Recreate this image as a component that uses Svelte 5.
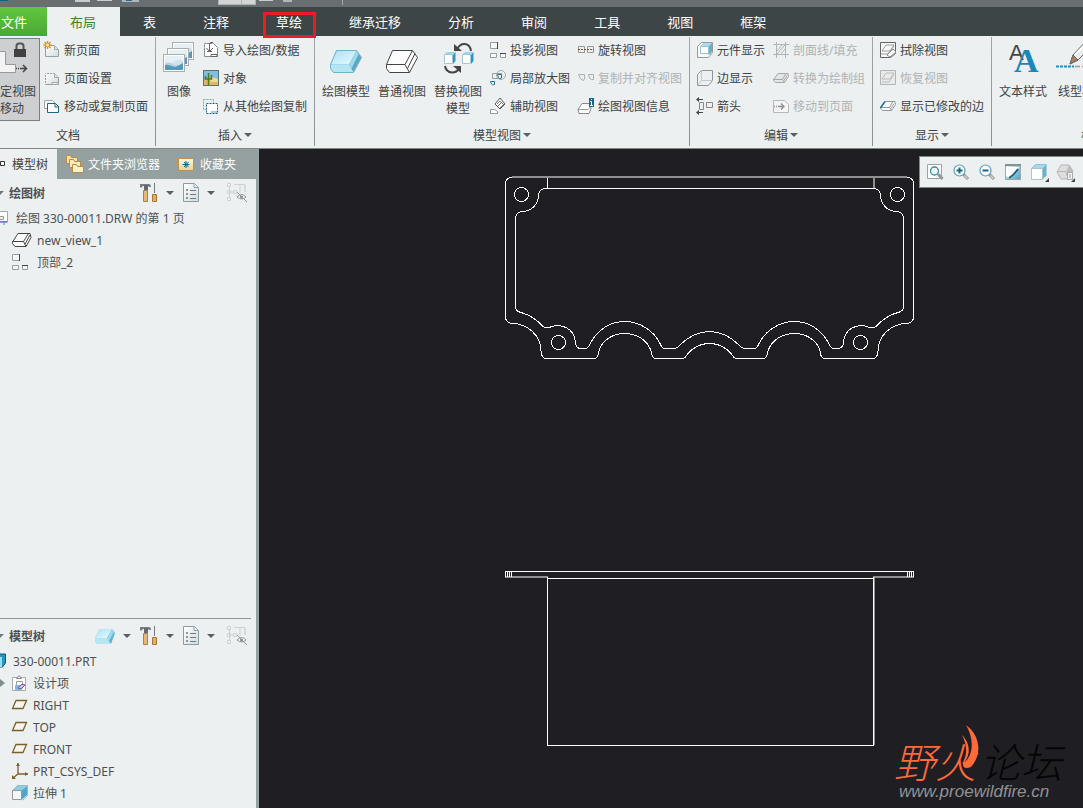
<script>
    let activeTab = $state("布局");
    let activePanel = $state("模型树");

    const tabs = ["布局", "表", "注释", "草绘", "继承迁移", "分析", "审阅", "工具", "视图", "框架"];

    const groups = [
        {
            name: "文档",
            large: [{label: "锁定视图移动", icon: "lockView", pressed: true}],
            columns: [[
                {label: "新页面", icon: "newSheet"},
                {label: "页面设置", icon: "sheetSetup"},
                {label: "移动或复制页面", icon: "moveSheet"}
            ]]
        },
        {
            name: "插入",
            menu: true,
            large: [{label: "图像", icon: "images", narrow: true}],
            columns: [[
                {label: "导入绘图/数据", icon: "importData"},
                {label: "对象", icon: "object"},
                {label: "从其他绘图复制", icon: "copyFrom"}
            ]]
        },
        {
            name: "模型视图",
            menu: true,
            large: [
                {label: "绘图模型", icon: "model"},
                {label: "普通视图", icon: "general"},
                {label: "替换视图模型", icon: "replace"}
            ],
            columns: [
                [
                    {label: "投影视图", icon: "projection"},
                    {label: "局部放大图", icon: "detail"},
                    {label: "辅助视图", icon: "auxiliary"}
                ],
                [
                    {label: "旋转视图", icon: "revolved"},
                    {label: "复制并对齐视图", icon: "copyAlign", disabled: true},
                    {label: "绘图视图信息", icon: "viewInfo"}
                ]
            ]
        },
        {
            name: "编辑",
            menu: true,
            large: [],
            columns: [
                [
                    {label: "元件显示", icon: "component"},
                    {label: "边显示", icon: "edges"},
                    {label: "箭头", icon: "arrows"}
                ],
                [
                    {label: "剖面线/填充", icon: "hatch", disabled: true},
                    {label: "转换为绘制组", icon: "convert", disabled: true},
                    {label: "移动到页面", icon: "toSheet", disabled: true}
                ]
            ]
        },
        {
            name: "显示",
            menu: true,
            large: [],
            columns: [[
                {label: "拭除视图", icon: "erase"},
                {label: "恢复视图", icon: "resume", disabled: true},
                {label: "显示已修改的边", icon: "modified"}
            ]]
        },
        {
            name: "格式",
            menu: true,
            last: true,
            large: [
                {label: "文本样式", icon: "textStyle"},
                {label: "线型样式", icon: "lineStyle", wide: true}
            ],
            columns: []
        }
    ];

    const panels = [
        {label: "模型树", icon: "treeTab", width: 8},
        {label: "文件夹浏览器", icon: "folders", width: 18},
        {label: "收藏夹", icon: "favorites", width: 16}
    ];

    const drawingTree = [
        {label: "new_view_1", icon: "viewNode"},
        {label: "顶部_2", icon: "projection"}
    ];

    const modelTree = [
        {label: "设计项", icon: "design", expandable: true},
        {label: "RIGHT", icon: "plane"},
        {label: "TOP", icon: "plane"},
        {label: "FRONT", icon: "plane"},
        {label: "PRT_CSYS_DEF", icon: "csys"},
        {label: "拉伸 1", icon: "extrude"}
    ];

    const viewTools = [
        {label: "重新调整", icon: "refit"},
        {label: "放大", icon: "zoomIn"},
        {label: "缩小", icon: "zoomOut"},
        {label: "重画", icon: "repaint"},
        {label: "显示样式", icon: "cube"},
        {label: "注释显示", icon: "annotation"}
    ];

    const page = `<path d="M1.5 3.5h9l4 4v7h-13z" fill="url(#paper)" stroke="#9a9fa0"/><path d="M10.5 3.5v4h4" fill="#dde1e2" stroke="#a5aaab"/>`;
    const block = (line, fill)=>`<path d="M5 3.500h10l.500 3-4 6h-9l-2-2v-1z" fill="${fill}" stroke="${line}"/><path d="M.5 9.500h9l3.500-6M9.500 9.500l2 3M11 10.500l3-5" fill="none" stroke="${line}"/>`;
    const lens = `<circle cx="6.500" cy="6.500" r="5.500" fill="#fff" stroke="#5b9fba" stroke-width="1.200"/><path d="M10.500 10.500l4.500 4.500" stroke="#8d9294" stroke-width="3"/><path d="M11.500 11.500l3 3" stroke="#e7d3c4" stroke-width="1.200"/>`;
    const picture = (x, y)=>`<g transform="translate(${x} ${y})"><rect x=".5" y=".5" width="21" height="17" fill="#fff" stroke="#a9afb1"/><rect x="2" y="2" width="18" height="14" fill="#cfe3ed"/><path d="M2 2h18v5q-5-3-9 1T2 7z" fill="#e6f1f6"/><path d="M2 11q6-2 9 0t9-2v7H2z" fill="#5598b9"/><path d="M2 10q4-3 8 0t10 0l-8 3z" fill="#b9d3df"/></g>`;
    const smallCube = (x)=>`<g transform="translate(${x} 10)"><path d="M9 3l2.500-3v9L9 12z" fill="#239bc9"/><path d="M0 2.500L3 0h8.500L9 2.500z" fill="#9ad5ea"/><path d="M.5 2.500h8v9h-8z" fill="#fff" stroke="#a5c6d1"/></g>`;

    const icons = {
        lockView: `<path d="M0 9.500h9.500v13h10v8H0" fill="#f3f3f3" stroke="#999"/><path d="M20.500 8V4q0-2.500 2.500-2.500h2q2.500 0 2.500 2.500v4" fill="none" stroke="#555" stroke-width="2"/><rect x="18" y="7" width="12" height="8" fill="#414141"/><path d="M20 26.500h1m1 0h1m1 0h6M27 23l3.500 3.500L27 30" fill="none" stroke="#444" stroke-width="1.500"/>`,
        images: picture(9, 0) + picture(4, 6) + picture(0, 12),
        model: `<path d="M6.500 8.500h20l5 7-8 15h-20l-3-4v-4z" fill="#5aa7c8"/><path d="M6.500 8.500h20l-7.500 14H.500z" fill="url(#ice)"/><path d="M.5 22.500H19l4.500 8h-20l-3-4z" fill="#b5e6f4"/><path d="M26.500 8.500L19 22.500l2.500 4 7.500-15z" fill="#9fd8eb"/><path d="M6.500 8.500h20l5 7-8 15h-20l-3-4v-4z" fill="none" stroke="#6fb3cd"/>`,
        general: `<path d="M6.500 8.500h20l5 7-8 15h-20l-3-4v-4z" fill="#fdfdfd" stroke="#454545"/><path d="M.5 22.500H19L26.500 8.500M19 22.500l4.500 8M21.500 26.500L29 11.500" fill="none" stroke="#454545"/>`,
        replace: smallCube(2) + smallCube(20) + `<path d="M15 7Q18 1.500 23 2q5 .5 6 7" fill="none" stroke="#454545" stroke-width="2"/><path d="M12 2v7h8zM19 24v7l-8-7z" fill="#454545"/><path d="M3 24q1 6 7 6.500 5 0 7-4" fill="none" stroke="#454545" stroke-width="2"/>`,
        textStyle: `<text x="2" y="18" font-family="Liberation Sans, sans-serif" font-size="22" fill="#454545">A</text><text x="7" y="30" font-family="Liberation Serif, serif" font-weight="bold" font-size="34" fill="#1b86b9">A</text>`,
        lineStyle: `<path d="M-10 24.500H8" stroke="#1c91c8" stroke-width="2" stroke-dasharray="3 1"/><path d="M9 24.500h30" stroke="#999" stroke-width="1.500" stroke-dasharray="5 2"/><path d="M4 22l3-9L22-3l6 5L12 18z" fill="#e8e9e9" stroke="#666"/><path d="M4 22l3-9 5 5z" fill="#a97e62" stroke="#666"/><path d="M9 13L23-1" stroke="#fff" stroke-width="2"/>`,
        newSheet: page + `<path d="M3.500-1v8M-.5 3h8M.5 0l6 6M6.500 0l-6 6" stroke="#e58a1c" stroke-width="1.300"/><circle cx="3.500" cy="3" r="1.500" fill="#fff1a0"/>`,
        sheetSetup: page + `<path d="M2 3.500h8M1.500 4v10" stroke="#ecf0f1" stroke-dasharray="1 2"/><path d="M8 12.500h6v2H8z" fill="#eee" stroke="#aaa"/>`,
        moveSheet: `<path d="M.5 2.500h8l3 3v5H.5z" fill="#fff" stroke="#a1a6a7"/><path d="M3.500 5.500h8l3 3v6h-11z" fill="#fff" stroke="#1d6485"/><path d="M11 6v3h4" fill="none" stroke="#1d6485"/>`,
        importData: `<path d="M1.500 1.500h9l4 4v9h-13z" fill="#fff" stroke="#888"/><path d="M2 6V1h8" fill="none" stroke="#ecf0f1" stroke-dasharray="1 2"/><path d="M6.500 9V2q0-1.500 1.500-1.500h2M3.500 6l3 3.500L10 6M4 9.500h5M8 12.500h6v2H8z" fill="none" stroke="#666"/>`,
        object: `<rect x=".5" y=".5" width="15" height="15" fill="#82bde0" stroke="#58717b"/><path d="M1 10q7-5 14 0v5H1z" fill="#dfb46c"/><path d="M9 7l6 2v3H7z" fill="#f0d79d"/><path d="M5.500 15V3M2.500 6v3h6V5" fill="none" stroke="#4b7a23" stroke-width="1.500"/>`,
        copyFrom: `<path d="M.5 1.500h10v10H.5z" fill="none" stroke="#8fa3ac" stroke-dasharray="2 1"/><path d="M3.500 5.500h11v10h-11z" fill="#fff" stroke="#1d6485" stroke-dasharray="2 1"/><path d="M8 13h6v2H8z" fill="#a8ccda"/>`,
        projection: `<path d="M.5.5h7v6h-7zM.5 11.500h6v4h-6zM10.500 11.500h5v4h-5z" fill="#f8f8f8" stroke="#979c9e"/><path d="M7.500 0v7M10 11.500h6" stroke="#444"/>`,
        detail: `<path d="M2.500 3.500h9v5h-9z" fill="none" stroke="#979c9e"/><circle cx="11" cy="5" r="4.500" fill="none" stroke="#a5aaab"/><path d="M7.500 4.500h4v3q-2 2-3 0zM.5 11.500h4v3q-2 1-3-.5z" fill="#fff" stroke="#1b7198"/>`,
        auxiliary: `<path d="M10 0l5 6-5 5-5-5z" fill="#fff" stroke="#555"/><path d="M7 6l3-3 3 3M8 8l4-4M10 10l4-4" stroke="#777" fill="none"/><path d="M.5 15.500v-4h4l3 2v2z" fill="#fff" stroke="#999"/>`,
        revolved: `<path d="M.5 4.500h6v6h-6zM9.500 4.500h6v6h-6z" fill="none" stroke="#999"/><path d="M0 7.500h16" stroke="#765a35" stroke-dasharray="2 1"/>`,
        copyAlign: `<path d="M.5 4.500h6q1 4-1 6Q2 10 .5 4.500zM10.500 4.500h5v5q-4 1-5-5z" fill="none" stroke="#aaafb0"/>`,
        viewInfo: `<path d="M4 5.500h8l1 5-2 5H1l-1-4z" fill="#fff" stroke="#888"/><path d="M0 11.500h10L14 7" fill="none" stroke="#999"/><rect x="11" y="0" width="5" height="9" fill="#146b91"/><path d="M12 3.500h1.500V7M12 7.500h3M13 1.500h1" stroke="#fff" fill="none"/>`,
        component: `<path d="M.5 4.500l4-4h11v10l-4 5H.500z" fill="#fafafa" stroke="#999"/><path d="M4 4l3-3h8v9l-3 3z" fill="#58b4d8"/><path d="M4 4l3-3h8l-3 3z" fill="#a9ddee"/><path d="M3.500 4.500h8v7h-8z" fill="#fff" stroke="#9cc3d1"/>`,
        edges: `<path d="M.5 4.500l4-4h11v10l-4 5H.500z" fill="none" stroke="#8f9596"/><path d="M4.500.500v10h11M4.500 10.500l-4 5" fill="none" stroke="#c3c8c9"/>`,
        arrows: `<path d="M0 1.500h6M0 14.500h6" stroke="#444"/><path d="M2-1l-3 2.500L2 4zM2 12l-3 2.500L2 17z" fill="#444"/><path d="M2.500 4.500h4v7h-4zM9.500 4.500h6v5h-6z" fill="none" stroke="#888"/>`,
        hatch: `<path d="M3.500 0v16M12.500 0v16M0 2.500h16M0 12.500h16M4 9l5-6M4 12l8-9M8 12l4-5" fill="none" stroke="#b0b5b6"/>`,
        convert: block("#a5a9aa", "#e4e6e6"),
        toSheet: `<path d="M.5 2.500h11l4 4v8H.500z" fill="#f3f4f4" stroke="#b5b9ba"/><path d="M1 8.500h1m1 0h1m1 0h6M8 5.500l3 3-3 3" fill="none" stroke="#8c9192" stroke-width="1.300"/>`,
        erase: `<path d="M.5.500h15v11l-5 4H.500z" fill="#f8f8f8" stroke="#666"/><path d="M2 9l4-6h8l-4 6zM1 12h7l6-8" fill="none" stroke="#9b9fa0"/><path d="M7 13l6-6 3 3-6 5z" fill="#fff" stroke="#888"/>`,
        resume: `<path d="M.5.500h15v14H.500z" fill="#e9ebeb" stroke="#b0b4b5"/><path d="M2 9l4-6h8l-4 6zM2 12h7l5-8" fill="none" stroke="#b9bdbe"/>`,
        modified: block("#92989a", "#fff") + `<path d="M.5 10l4.500-6.500" stroke="#1b7198" stroke-width="1.500"/>`,
        treeTab: `<path d="M.5 5.500h4v4h-4z" fill="#fff" stroke="#333"/>`,
        folders: `<path d="M.5.500h4l1 2h6v6H.500z" fill="#f8e2a5" stroke="#b68d46"/><path d="M3.500 4.500h4l1 2h6v6h-11z" fill="#fae9b9" stroke="#b68d46"/><path d="M6.500 9.500h4l1 2h6v6h-11z" fill="#fff0c7" stroke="#b68d46"/>`,
        favorites: `<path d="M.5 2.500h15v12H.500z" fill="url(#folder)" stroke="#ba934e"/><path d="M8 5v7M4.500 8.500h7M6 6l4.500 5M10.500 6L6 11" stroke="#096488" stroke-width="1"/>`,
        tools: `<path d="M0 4V1h9q2 0 2 3H9L8 3H3L1 5z" fill="#777e85"/><path d="M4 2h4v5H4z" fill="#626b73"/><path d="M3.500 7.500h4v11h-4z" fill="#e3b878" stroke="#b07f42"/><path d="M14 0h1v10h-1z" fill="#747a83"/><path d="M12.500 11.500h4v7h-4z" fill="#e3b060" stroke="#a57438"/>`,
        list: `<path d="M.5.500h11l4 4v14H.500z" fill="url(#paper)" stroke="#8d9ca3"/><path d="M11 .500v4h4" fill="#eef2f3" stroke="#91a0a6"/><path d="M7 7.500h6M7 11.500h6M7 15.500h6" stroke="#777"/><path d="M3.500 6.500h1v1h-1zM3.500 10.500h1v1h-1zM3.500 14.500h1v1h-1z" fill="none" stroke="#777"/>`,
        hiddenTree: `<path d="M.5.500h3v3h-3zM.5 14.500h3v3h-3zM.5 7.500h3v3h-3zM6.500 7.500h3v3h-3zM2.500 4v10M4 9h3M7 1.500h11v7M13 2v8M18 2v7" fill="none" stroke="#ced2d3"/><path d="M10 14q5-5 9 0-4 4-9 0z" fill="#ecf0f1" stroke="#999"/><circle cx="14.500" cy="14" r="1.500" fill="#888"/><path d="M10 9l10 10" stroke="#999"/>`,
        prism: `<path d="M5 3h12l3 4-4 11H2l-2-3v-3z" fill="#5fb2d2"/><path d="M5 3h12l-5 9H0z" fill="url(#ice)"/><path d="M0 12h12l4 6H2l-2-3z" fill="#b5e6f4"/><path d="M17 3l-5 9 2 3 5-9z" fill="#9fd8eb"/>`,
        sheetNode: `<path d="M0 1.500h7.500v11H0" fill="#fff" stroke="#9ab"/><path d="M0 11.500h7M4 12v3" stroke="#199bcb"/><path d="M0 6.500h3.500v3H0" fill="#eee" stroke="#999"/>`,
        viewNode: `<path d="M6 1.500h12l1 4-5 9H3l-2.500-3V10z" fill="#fff" stroke="#444"/><path d="M.5 9.500h11l5-8M11.500 9.500l2.500 5M13 12l5-9" fill="none" stroke="#444"/>`,
        part: `<path d="M-8 4l4-3H5.500v9l-3 4H-8z" fill="#2696be" stroke="#125a78"/><path d="M-8 4H2v10h-10z" fill="#93def3"/>`,
        design: `<path d="M.5 2.500h13v13H.500z" fill="#fff" stroke="#aaa"/><path d="M4.500 3.500h5L7 .500z" fill="#eee" stroke="#888"/><path d="M4.500 6.500h6v4h-6z" fill="#fff" stroke="#999"/><path d="M3 10h6l2-2v5l-2 2H3z" fill="#78bfdd"/><path d="M6 13l4-4 3 1-4 4z" fill="#d9b5ea" stroke="#80529f"/>`,
        plane: `<path d="M4 3.500h10.500L11 11.500H.500z" fill="#f7f4ec" stroke="#79602d" stroke-width="1.300"/>`,
        csys: `<path d="M6 0v11h10M6 11l-5 4" fill="none" stroke="#79602d" stroke-width="1.300"/><path d="M4 3h4L6 0zM13 9v4l3-2zM0 12v4h4z" fill="#79602d"/>`,
        extrude: `<path d="M9.500 5.500L15 1v9l-5.500 5z" fill="#4ba7cb"/><path d="M.5 5.500l5-5h10l-6 5z" fill="#8ccce4" stroke="#9bb7c2"/><path d="M15.500.500v10l-5 5" fill="none" stroke="#9bb7c2"/><path d="M.5 5.500h9v9h-9z" fill="#f7f7f7" stroke="#999"/>`,
        refit: `<path d="M.5.500h14v14H.500z" fill="#fff" stroke="#9ba4a6"/><circle cx="7.500" cy="7" r="4" fill="#eff9fc" stroke="#3b87a5" stroke-width="1.300"/><path d="M11 10l4.500 5" stroke="#94979a" stroke-width="3"/>`,
        zoomIn: lens + `<path d="M6.500 3.500v6M3.500 6.500h6" stroke="#13678b" stroke-width="2"/>`,
        zoomOut: lens + `<path d="M3.500 6.500h6" stroke="#13678b" stroke-width="2"/>`,
        repaint: `<rect x=".5" y=".5" width="15" height="15" fill="url(#sky)" stroke="#9baaaf"/><path d="M1 3h13q-4 8-10 11l-3-2z" fill="#fff"/><path d="M13 5Q9 11 4 14" fill="none" stroke="#155c7a" stroke-width="1.800"/><path d="M0 1h16" stroke="#8a8f91" stroke-width="2"/>`,
        cube: `<path d="M11.500 4.500l4-4v11l-4 4z" fill="#62b5d3"/><path d="M.5 4.500l4-4h11l-4 4z" fill="#a4daec" stroke="#8fc4d6"/><path d="M.5 4.500h11v11H.500z" fill="#fff" stroke="#a5c6d1"/><path d="M18 14v4h-4z" fill="#444"/>`,
        annotation: `<path d="M0 8l4-7h8l4 6-3 8H4z" fill="#dedede" stroke="#b5b5b5"/><path d="M9 8l3-7 4 6v5H9z" fill="#bdbdbd"/><path d="M0 7.500h9" stroke="#b5b5b5"/><path d="M10.500 8.500h5v7h-5z" fill="#f2f2f2" stroke="#aaa"/><path d="M12 11h2m-2 2h2" stroke="#999"/><path d="M18 14v4h-4z" fill="#444"/>`
    };
</script>

{#snippet icon(name, width = 16, height = 16)}
    <svg class="icon" {width} {height} viewBox="0 0 {width} {height}" aria-hidden="true">{@html icons[name]}</svg>
{/snippet}

{#snippet paneTools(prism)}
    <div class="paneTools">
        {#if prism}
            <button aria-label="模型">{@render icon("prism", 20, 20)}<span class="caret"></span></button>
        {/if}
        <button aria-label="设置">{@render icon("tools", 18, 20)}<span class="caret"></span></button>
        <button aria-label="显示">{@render icon("list", 16, 20)}<span class="caret"></span></button>
        <button aria-label="隐藏项">{@render icon("hiddenTree", 20, 20)}</button>
    </div>
{/snippet}

<svg class="defs" width="0" height="0" aria-hidden="true">
    <defs>
        <linearGradient id="paper" x1="0" y1="0" x2="1" y2="1"><stop offset="0" stop-color="#fff"/><stop offset="1" stop-color="#cfdce1"/></linearGradient>
        <linearGradient id="ice" x1="0" y1="0" x2="1" y2="1"><stop offset="0" stop-color="#a3e1f5"/><stop offset="1" stop-color="#ecfbff"/></linearGradient>
        <linearGradient id="sky" x1="0" y1="0" x2="1" y2="1"><stop offset="0" stop-color="#eaf5fa"/><stop offset="1" stop-color="#4ea3c5"/></linearGradient>
        <linearGradient id="folder" x1="0" y1="0" x2="0" y2="1"><stop offset="0" stop-color="#fff8df"/><stop offset="1" stop-color="#f2cf86"/></linearGradient>
    </defs>
</svg>

<div class="app">
    <div class="quickbar">
        <svg width="400" height="7" aria-hidden="true">
            <path d="M0 0h8v1H0z" fill="#1b5e83"/>
            <path d="M75 0h15v2H75zM97 0h15v1H97zM259 0h14v1h-14z" fill="#c8cccd"/>
            <path d="M122 0h17v2h-17z" fill="#b0b5b7"/><path d="M126 0h6v1h-6z" fill="#246b91"/>
            <path d="M218 0h38v5h-38z" fill="#aeb3b4"/><path d="M219 0h22v4h-22zM242 0h13v4h-13z" fill="#d3d6d7"/>
            <path d="M283 0h9v2h-9z" fill="#b0b5b7"/><path d="M342 0h1v5h-1z" fill="#a5abac"/>
        </svg>
    </div>

    <nav class="tabs">
        <button class="file">文件</button>
        {#each tabs as tab}
            <button class:active={tab === activeTab} class:marked={tab === "草绘"} onclick={()=>{activeTab = tab}}>{tab}</button>
        {/each}
    </nav>

    <div class="ribbon">
        {#each groups as group}
            <section class="group" class:last={group.last}>
                <div class="commands">
                    {#each group.large as command}
                        <button class="large" class:pressed={command.pressed} class:narrow={command.narrow} class:wide={command.wide}>
                            {@render icon(command.icon, 32, 32)}
                            <span>{command.label}</span>
                        </button>
                    {/each}
                    {#each group.columns as column}
                        <div class="column">
                            {#each column as command}
                                <button class="small" disabled={command.disabled}>
                                    {@render icon(command.icon)}
                                    <span>{command.label}</span>
                                </button>
                            {/each}
                        </div>
                    {/each}
                </div>
                <button class="groupName">{group.name}{#if group.menu}<span class="caret"></span>{/if}</button>
            </section>
        {/each}
    </div>

    <div class="workspace">
        <aside>
            <div class="panelTabs">
                {#each panels as panel}
                    <button class:active={panel.label === activePanel} onclick={()=>{activePanel = panel.label}}>
                        {@render icon(panel.icon, panel.width, panel.width === 18 ? 18 : 16)}
                        <span>{panel.label}</span>
                    </button>
                {/each}
            </div>

            <section class="pane drawing">
                <header>
                    <span class="fold"></span>
                    <h2>绘图树</h2>
                    {@render paneTools(false)}
                </header>
                <ul>
                    <li><button class="sheetRow">{@render icon("sheetNode", 8, 16)}绘图 330-00011.DRW 的第 1 页</button></li>
                    {#each drawingTree as node}
                        <li><button class="viewRow">{@render icon(node.icon, 20, 16)}{node.label}</button></li>
                    {/each}
                </ul>
            </section>

            <section class="pane model">
                <header>
                    <span class="fold"></span>
                    <h2>模型树</h2>
                    {@render paneTools(true)}
                </header>
                <ul>
                    <li><button>{@render icon("part", 8, 16)}330-00011.PRT</button></li>
                    {#each modelTree as node}
                        <li><button><span class="expander" class:shown={node.expandable}></span>{@render icon(node.icon)}{node.label}</button></li>
                    {/each}
                </ul>
            </section>
        </aside>

        <main>
            <svg class="sheet" viewBox="259 149 824 659" aria-label="绘图">
                <defs>
                    <!-- left half of the flange, mirrored about x = 709.5 -->
                    <g id="flangeHalf">
                        <path d="M710 343.500C698 343.500 691 349 686 356Q685 358.500 682 358.500H655Q652 358 651.500 352C647 339 636 333.500 624.500 333.500C613 333.500 601 340 598.500 353Q598 358.500 594 358.500H546Q541.500 358.500 541 351C541 336 528 323.500 512 323.500Q505.500 322.500 505.500 317V184Q505.500 177.500 512 177.500"/>
                        <path d="M710 188.500H545Q538.500 189 538.500 196C538 204 532 211.500 522 211.500Q515.500 212.500 515.500 219V306Q515.500 311.500 521 312.500C531 315 537 320 543 326.500Q545 328.500 549 327.500C560 323 574 327 575.500 342Q576 348.500 581 348.500H585Q588 348.500 590 344C597 330 610 321.500 624.500 321.500C640 321.500 654 331 660 343.500Q662 348.500 665 348.500H674Q677 348.500 680 345C688 337 697 331.500 710 331.500"/>
                        <circle cx="521.5" cy="194.5" r="7"/>
                        <circle cx="558.5" cy="342.5" r="7"/>
                    </g>
                </defs>
                <use href="#flangeHalf"/>
                <use href="#flangeHalf" transform="translate(1419 0) scale(-1 1)"/>
                <path class="soft" d="M512 177H907M874 178v10M505 577h43M873 577h41M874 578v167"/>
                <path d="M547.500 178v10M505.500 577v-5.500H913.500v5.500M507.500 572v5M509.500 572v5M511.500 572v5M907.500 572v5M909.500 572v5M911.500 572v5M547.500 577v168.500H873.500V577M548 578.500H873"/>
            </svg>

            <div class="viewTools">
                {#each viewTools as tool}
                    <button aria-label={tool.label}>{@render icon(tool.icon, 18, 18)}</button>
                {/each}
            </div>

            <svg class="watermark" width="176" height="80" viewBox="0 0 176 80">
                <text class="name wild" x="-3" y="53">野火</text>
                <text class="name" x="83" y="53">论坛</text>
                <path d="M69 0C84 11 85 30 74 42Q65 45 66 38C76 32 78 15 69 0ZM65 10C75 20 73 33 65 39C71 29 70 20 65 10Z" fill="#ff6a38"/>
                <text class="url" x="2" y="72">www.proewildfire.cn</text>
            </svg>
        </main>
    </div>
</div>

<style>
    :global(body){
        margin: 0;
    }

    .app{
        display: flex;
        flex-direction: column;
        height: 100vh;
        overflow: hidden;
        background: #ecf0f1;
        color: #404344;
        font-family: "Noto Sans", "Noto Sans CJK SC", sans-serif;
        font-size: 12px;
        line-height: 17px;
    }

    .defs{
        position: absolute;
    }

    button{
        background: none;
        border: none;
        padding: 0;
        color: inherit;
        font: inherit;
        white-space: nowrap;
    }

    .icon{
        display: block;
        flex: none;
        overflow: visible;
    }

    .caret{
        border: 4px solid transparent;
        border-top-color: #5b5f60;
        border-bottom: none;
    }

    .quickbar{
        height: 7px;
        flex: none;
        background: #696f70;
        overflow: hidden;
    }

    .quickbar svg{
        display: block;
    }

    .tabs{
        display: flex;
        flex: none;
        height: 29px;
        background: #3d4546;
        color: #fff;
        font-size: 13px;
    }

    .tabs button{
        padding: 1px 24px 0 23px;
    }

    .tabs .file{
        padding: 1px 20px 0 1px;
        background: linear-gradient(#5fc83e, #4ca634);
    }

    .tabs .active{
        background: #ecf0f1;
        color: #3b8427;
    }

    .tabs .marked{
        position: relative;
    }

    .marked::after{
        content: "";
        position: absolute;
        inset: 5px 10px -2px;
        border: 3px solid #ed1c24;
        z-index: 1;
    }

    .ribbon{
        display: flex;
        flex: none;
        overflow: hidden;
        border-bottom: 1px solid #7f898a;
    }

    .group{
        display: flex;
        flex-direction: column;
        flex: none;
        padding: 0 3px;
        border-right: 1px solid;
        border-image: linear-gradient(#ecf0f1 2px, #a0a7a8 2px, #899192 109px, #ecf0f1 109px) 1;
    }

    .group:first-child{
        margin-left: -19px;
    }

    .group.last{
        min-width: 206px;
    }

    .commands{
        display: flex;
        height: 86px;
    }

    .groupName{
        display: flex;
        align-items: center;
        justify-content: center;
        gap: 2px;
        height: 26px;
    }

    .large{
        display: flex;
        flex-direction: column;
        align-items: center;
        gap: 9px;
        width: 56px;
        height: 83px;
        margin-top: 2px;
        padding: 3px;
        border: 1px solid transparent;
        box-sizing: border-box;
    }

    .large span{
        width: 48px;
        white-space: normal;
    }

    .large.narrow{
        width: 40px;
    }

    .large.narrow span{
        width: 24px;
    }

    .large.wide{
        width: 62px;
    }

    .large.pressed{
        background: #cecfd1;
        border-color: #7d8081;
    }

    .small{
        display: flex;
        align-items: center;
        gap: 4px;
        height: 28px;
        padding: 0 4px;
    }

    .small:disabled{
        color: #afb3b4;
    }

    .workspace{
        display: flex;
        flex: 1;
        min-height: 0;
    }

    aside{
        display: flex;
        flex-direction: column;
        flex: none;
        width: 256px;
        border-right: 3px solid #95a1a2;
        color: #4d5051;
    }

    .panelTabs{
        display: flex;
        height: 30px;
        background: #95a0a1;
        color: #fff;
    }

    .panelTabs button{
        display: flex;
        align-items: center;
        gap: 4px;
        padding: 0 9px;
    }

    .panelTabs button:nth-child(3){
        gap: 6px;
    }

    .panelTabs button:first-child{
        padding-left: 0;
    }

    .panelTabs .active{
        background: #ecf0f1;
        color: #404344;
    }

    .drawing{
        flex: 1;
    }

    .model{
        margin-right: 5px;
        padding: 3px 0 4px;
        border-top: 1px solid #8f999a;
    }

    .model header{
        margin-right: -5px;
    }

    header{
        display: flex;
        align-items: center;
        height: 28px;
        padding-right: 9px;
    }

    .fold{
        border: 5px solid transparent;
        border-top-color: #707576;
        border-bottom: none;
        margin: 0 5px 0 -6px;
    }

    h2{
        margin: 0;
        font-size: 12px;
    }

    .paneTools{
        display: flex;
        gap: 9px;
        margin-left: auto;
    }

    .paneTools button{
        display: flex;
        align-items: center;
        gap: 8px;
    }

    .paneTools button:last-child{
        margin-left: 3px;
    }

    ul{
        margin: 0;
        padding: 0;
        list-style: none;
    }

    li button{
        display: flex;
        align-items: center;
        gap: 5px;
        height: 22px;
    }

    li .sheetRow{
        gap: 8px;
    }

    li .viewRow{
        padding-left: 12px;
    }

    .expander{
        width: 7px;
    }

    .expander.shown{
        width: 0;
        margin-right: 2px;
        border: 4px solid transparent;
        border-left: 5px solid #858a8b;
        border-right: none;
    }

    main{
        position: relative;
        flex: 1;
        min-width: 0;
        background: #1f1e23;
    }

    main .sheet{
        display: block;
        width: 100%;
        height: 100%;
        fill: none;
        stroke: #fff;
        shape-rendering: crispEdges;
    }

    .sheet .soft{
        stroke: #8f8f91;
        stroke-width: 2px;
    }

    .viewTools{
        position: absolute;
        top: 7px;
        right: 0;
        display: flex;
        padding: 0 5px 0 2px;
        background: #ecf0f1;
        border: 1px solid #7f898a;
        border-right: none;
    }

    .viewTools button{
        width: 26px;
        height: 30px;
        padding: 1px 3px 0 5px;
    }

    .watermark{
        position: absolute;
        right: 10px;
        bottom: 3px;
        overflow: visible;
    }

    .watermark .name{
        font-family: "Noto Sans CJK SC", sans-serif;
        font-size: 41px;
        font-style: italic;
        font-weight: 300;
        fill: #050505;
    }

    .watermark .wild{
        fill: #ff6a38;
    }

    .watermark .url{
        font-family: "Liberation Sans", sans-serif;
        font-size: 17px;
        font-style: italic;
        fill: #929295;
    }
</style>
